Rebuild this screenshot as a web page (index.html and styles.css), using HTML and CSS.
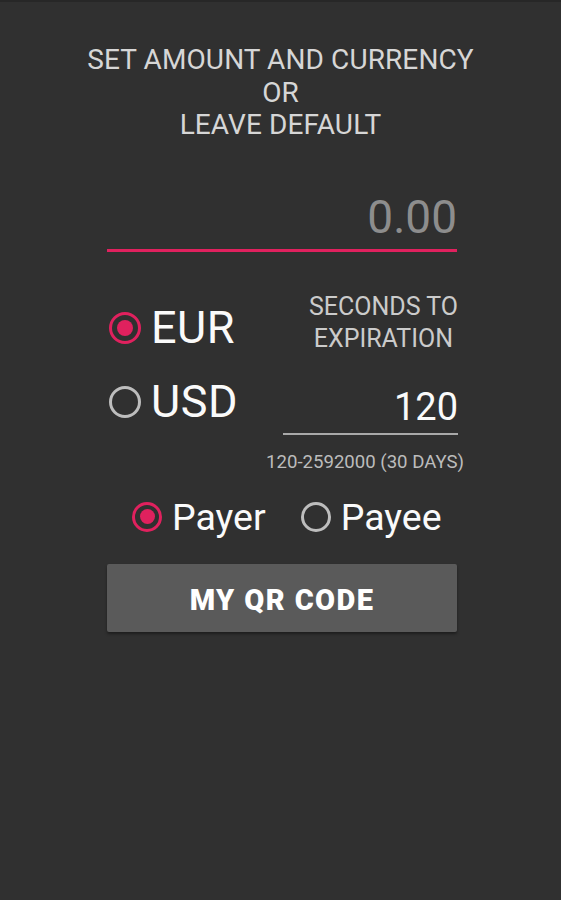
FILE: index.html
```html
<!DOCTYPE html>
<html>
<head>
<meta charset="utf-8">
<link rel="stylesheet" href="styles.css">
</head>
<body>
<div class="screen">
  <div class="title">SET AMOUNT AND CURRENCY<br>OR<br>LEAVE DEFAULT</div>
  <div class="amount">0.00</div>
  <div class="options">
    <div class="currencies">
      <div class="currency"><span class="radio big checked"></span><span class="cur-label">EUR</span></div>
      <div class="currency"><span class="radio big"></span><span class="cur-label">USD</span></div>
    </div>
    <div class="expiry">
      <div class="exp-label">SECONDS TO<br>EXPIRATION</div>
      <div class="exp-input">120</div>
      <div class="exp-hint">120-2592000 (30 DAYS)</div>
    </div>
  </div>
  <div class="roles">
    <div class="role"><span class="radio checked"></span><span class="role-label">Payer</span></div>
    <div class="role"><span class="radio"></span><span class="role-label">Payee</span></div>
  </div>
  <div class="button">MY QR CODE</div>
</div>
</body>
</html>
```
FILE: styles.css
```css
html, body {
  margin: 0;
  padding: 0;
  background: #303030;
}
body {
  font-family: Roboto, "Noto Sans", sans-serif;
  width: 561px;
  height: 900px;
  overflow: hidden;
}
.screen {
  display: flex;
  flex-direction: column;
  border-top: 2px solid #272727;
  padding-top: 42px;
}
.title {
  font-size: 28px;
  line-height: 32.5px;
  letter-spacing: 0.1px;
  color: #d6d6d6;
  text-align: center;
}
.amount {
  margin: 53px 104px 0 107px;
  font-size: 46px;
  line-height: 45px;
  color: #8d8d8d;
  text-align: right;
  padding-bottom: 9px;
  border-bottom: 3px solid #e0215e;
}
.options {
  display: flex;
  justify-content: space-between;
  margin: 39px 103px 0 109px;
}
.currencies {
  display: flex;
  flex-direction: column;
}
.currency {
  display: flex;
  align-items: center;
  height: 74px;
  gap: 10px;
}
.cur-label {
  font-size: 45px;
  line-height: 44px;
  letter-spacing: 0.5px;
  color: #fafafa;
}
.radio {
  box-sizing: border-box;
  width: 30px;
  height: 30px;
  border-radius: 50%;
  border: 3px solid #bdbdbd;
  display: flex;
  align-items: center;
  justify-content: center;
  flex: none;
}
.radio.big {
  width: 32px;
  height: 32px;
}
.radio.checked {
  border-color: #e0215e;
}
.radio.checked::after {
  content: "";
  width: 15px;
  height: 15px;
  border-radius: 50%;
  background: #e0215e;
}
.radio.big.checked::after {
  width: 16px;
  height: 16px;
}
.expiry {
  display: flex;
  flex-direction: column;
  align-items: flex-end;
  width: 175px;
}
.exp-label {
  font-size: 25px;
  line-height: 32px;
  color: #cbcbcb;
  text-align: center;
}
.exp-input {
  align-self: stretch;
  margin-top: 33px;
  font-size: 38px;
  line-height: 38px;
  color: #fafafa;
  text-align: right;
  padding-bottom: 7px;
  border-bottom: 2px solid #a9a9a9;
}
.exp-hint {
  margin-top: 17px;
  margin-right: -6px;
  font-size: 18.6px;
  line-height: 20px;
  color: #bcbcbc;
  white-space: nowrap;
}
.roles {
  display: flex;
  align-items: center;
  height: 50px;
  margin-top: 20px;
  padding-left: 132px;
  gap: 35px;
}
.role {
  display: flex;
  align-items: center;
  gap: 10px;
}
.role-label {
  font-size: 37.5px;
  line-height: 36px;
  color: #fafafa;
}
.button {
  box-sizing: border-box;
  margin: 22px 104px 0 107px;
  height: 68px;
  padding-top: 4px;
  background: #5a5a5a;
  border-radius: 2px;
  box-shadow: 0 2px 3px rgba(0, 0, 0, 0.4);
  color: #ffffff;
  font-weight: 900;
  font-size: 29px;
  letter-spacing: 1.4px;
  display: flex;
  align-items: center;
  justify-content: center;
}
```
